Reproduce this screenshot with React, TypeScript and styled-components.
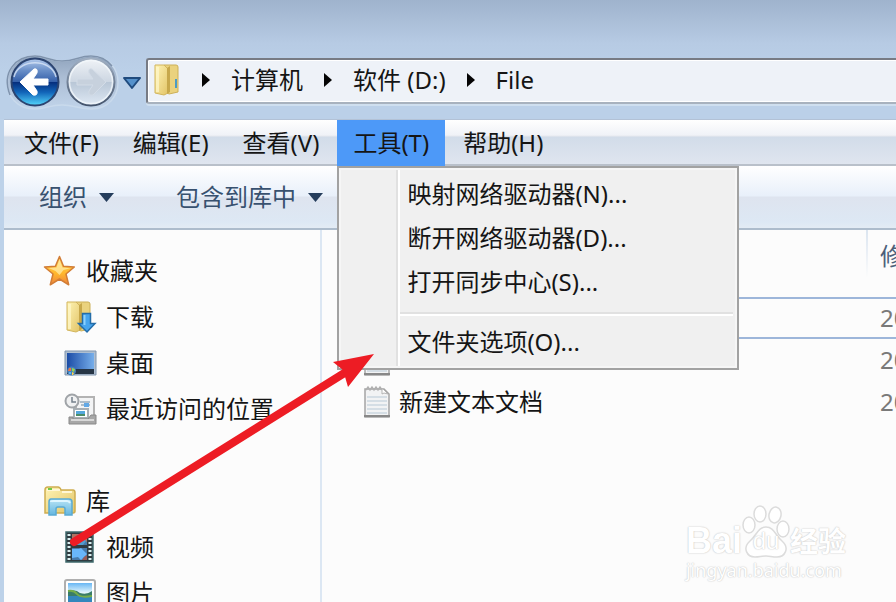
import React from "react";
import styled, { createGlobalStyle, css } from "styled-components";

const GlobalStyle = createGlobalStyle`
  * { box-sizing: border-box; }
  html, body { margin: 0; overflow: hidden; }
  body, button, table {
    font-family: "Noto Sans", "Noto Sans CJK SC", sans-serif;
    font-size: 24px;
    line-height: 32px;
    color: #151515;
  }
  button { margin: 0; border: 0; padding: 0; background: none; white-space: nowrap; }
  a { color: inherit; text-decoration: none; }
  svg { display: block; flex: none; }
`;

const Window = styled.div`
  position: relative;
  display: flex;
  flex-direction: column;
  height: 100vh;
  overflow: hidden;
  background: linear-gradient(#9fb3cd 0px, #b7cbe4 44px, #bbd0e8 70px, #bbd0e8 100%);
`;

const NavRow = styled.header`
  display: flex;
  align-items: flex-start;
  margin-top: 52px;
  height: 67px;
  flex: none;
`;

const NavPod = styled.div`
  position: relative;
  display: flex;
  gap: 6px;
  width: 117px;
  padding: 5px 0 0 10px;
  flex: none;
`;

const PodBackdrop = styled.svg`
  position: absolute;
  left: 0;
  top: 0;
`;

const RoundButton = styled.button`
  position: relative;
  width: 50px;
  height: 50px;
`;

const HistoryButton = styled.button`
  display: flex;
  justify-content: center;
  align-items: center;
  width: 29px;
  height: 62px;
  flex: none;
`;

const AddressBar = styled.nav`
  display: flex;
  align-items: center;
  gap: 21px;
  flex: 1;
  height: 46px;
  margin-top: 6px;
  padding: 0 7px 2px 5px;
  border: 2px solid #777b84;
  border-right: 0;
  border-bottom-color: #a8b2be;
  border-radius: 3px 0 0 3px;
  background: #eef2f8;
  box-shadow: inset 1px -1px 0 #fff, inset 0 1px 0 #fff, 0 2px 0 #cfdfef;
`;

const Frame = styled.main`
  display: flex;
  flex-direction: column;
  flex: 1;
  min-height: 0;
  border-left: 4px solid #bdd2e9;
  background: #fcfcfc;
`;

const MenuBar = styled.div`
  display: flex;
  gap: 2px;
  height: 47px;
  flex: none;
  padding-left: 4px;
  border-top: 1px solid #b3c2d6;
  border-bottom: 2px solid #b9c0ca;
  background: linear-gradient(#fff 0, #f0f2f7 15px, #e7e9ef 16px, #d2dce9 17px, #dfe5ef 100%);
`;

const MenuAnchor = styled.div`
  position: relative;
  z-index: 3;
`;

const MenuButton = styled.button<{ $open?: boolean }>`
  height: 46px;
  padding: 0 16px;
  ${(p) => p.$open && css`background: #4d99f8;`}
`;

const DropDown = styled.div`
  position: absolute;
  left: 0;
  top: 46px;
  width: 402px;
  padding: 4px 4px 4px 0;
  border: 2px solid #a2a2a2;
  background: linear-gradient(90deg, #f0f0f0 57px, #e1e1e1 57px, #e1e1e1 59px, #fff 59px, #fff 61px, #f0f0f0 61px);
  box-shadow: inset 0 0 0 2px #f6f6f6;
`;

const MenuItem = styled.button`
  display: block;
  width: 100%;
  height: 44px;
  padding: 0 0 0 68px;
  text-align: left;
`;

const MenuRule = styled.hr`
  height: 4px;
  margin: 8px 0 4px 61px;
  border: 0;
  border-top: 2px solid #e1e1e1;
  background: #fff;
`;

const CommandBar = styled.div`
  display: flex;
  align-items: center;
  gap: 62px;
  height: 64px;
  flex: none;
  padding-left: 35px;
  border-bottom: 2px solid #adbccc;
  background: linear-gradient(#fff 0, #e8f0fa 30px, #dee4ef 31px, #dde8f4 56px, #e3ebf4 100%);
`;

const CommandButton = styled.button`
  display: flex;
  align-items: center;
  gap: 12px;
  color: #38516f;
`;

const Panes = styled.div`
  display: flex;
  flex: 1;
  min-height: 0;
`;

const Sidebar = styled.aside`
  width: 318px;
  flex: none;
  padding: 18px 0 0 38px;
  border-right: 2px solid #dce7f3;
`;

const TreeGroup = styled.ul`
  margin: 0 0 46px;
  padding: 0;
  list-style: none;
`;

const TreeLink = styled.a<{ $child?: boolean }>`
  display: flex;
  align-items: center;
  gap: ${(p) => (p.$child ? 8 : 10)}px;
  height: 46px;
  padding-left: ${(p) => (p.$child ? 22 : 0)}px;
  white-space: nowrap;
`;

const FilePane = styled.section`
  flex: 1;
  min-width: 0;
  padding-left: 28px;
  overflow: hidden;
`;

const FileTable = styled.table`
  width: 100%;
  table-layout: fixed;
  border-collapse: separate;
  border-spacing: 0;
`;

const HeadCell = styled.th<{ $date?: boolean }>`
  height: 67px;
  padding: 10px 0 0 14px;
  width: ${(p) => (p.$date ? "30px" : "auto")};
  overflow: hidden;
  vertical-align: top;
  text-align: left;
  font-weight: 400;
  white-space: nowrap;
  color: #4c607a;
  ${(p) =>
    p.$date &&
    css`
      background: linear-gradient(#dbe5f0, #fcfcfc 48px) no-repeat left top / 2px 48px;
    `}
`;

const FileRow = styled.tr<{ $selected?: boolean }>`
  td {
    height: 42px;
    padding: 0 0 0 14px;
    overflow: hidden;
    white-space: nowrap;
    color: #797979;
    box-shadow: ${(p) => (p.$selected ? "inset 0 2px #9db6da, inset 0 -2px #9db6da" : "none")};
  }
  td:first-child { padding-left: 13px; color: #151515; }
`;

const FileName = styled.span`
  display: flex;
  align-items: center;
  gap: 8px;
`;

const Annotation = styled.svg`
  position: absolute;
  left: 60px;
  top: 345px;
  z-index: 5;
  pointer-events: none;
`;

const Watermark = styled.div`
  position: absolute;
  right: 50px;
  bottom: 20px;
  z-index: 2;
  color: #fff;
  text-shadow: 0 0 1px #c4c4c4, 0 0 2px #d4d4d4;
`;

const WatermarkLogo = styled.div`
  display: flex;
  align-items: flex-end;
  height: 54px;
  font-weight: 700;
`;

const Brand = styled.span`
  font-family: "Liberation Sans", sans-serif;
  font-size: 36px;
  line-height: 34px;
`;

const Paw = styled.span`
  position: relative;
  width: 48px;
  height: 53px;
`;

const PawText = styled.span`
  position: absolute;
  left: 0;
  right: 0;
  bottom: 5px;
  text-align: center;
  font-family: "Liberation Sans", sans-serif;
  font-size: 24px;
  font-weight: 400;
  line-height: 24px;
`;

const Product = styled.span`
  font-size: 28px;
  line-height: 34px;
`;

const Site = styled.div`
  font-size: 18px;
  line-height: 24px;
`;

const Crumb = () => (
  <svg width="8" height="14" viewBox="0 0 8 14" aria-hidden="true"><path d="M0 0l8 7-8 7z" fill="#050505" /></svg>
);

const Caret = () => (
  <svg width="15" height="9" viewBox="0 0 15 9" aria-hidden="true"><path d="M0 0h15l-7.500 9z" fill="#253d5c" /></svg>
);

const FolderShape = () => (
  <>
    <path d="M11 2h12q2 0 2 2v25l-9 2-5-3z" fill="#ead27e" stroke="#ccb058" />
    <path d="M2 2h9l4 4v24l-4 2-9-2z" fill="url(#folderFace)" stroke="#d2b55c" />
    <path d="M14 5l3-2v26l-3 2z" fill="#c7a84b" />
    <path d="M3 4h3v25H3z" fill="#fff8cc" opacity=".7" />
  </>
);

const Star = () => (
  <svg width="34" height="32" viewBox="0 0 34 32" aria-hidden="true">
    <path d="M17.500 1.500l4 9.800 10.800.7-8.300 7 2.700 10.800-9.200-5.800-9.200 5.800L11 19l-8.500-7 10.900-.7z" fill="url(#starFill)" stroke="#d27d36" strokeWidth="1.500" strokeLinejoin="round" />
    <path d="M17.500 4.500l3 8 8 .7-7 1.800-4 5-4-4-7-3 8-.5z" fill="#fff2b8" opacity=".65" />
  </svg>
);

const Download = () => (
  <svg width="34" height="34" viewBox="0 0 34 34" aria-hidden="true">
    <g transform="translate(1 0)"><FolderShape /></g>
    <path d="M18.500 13.500h8v10H31L23 32l-8.500-8.500h4z" fill="#47a5ee" stroke="#246da9" strokeWidth="1.500" />
    <path d="M20.500 15v10" stroke="#8bd1ff" strokeWidth="2" />
  </svg>
);

const Desktop = () => (
  <svg width="34" height="32" viewBox="0 0 34 32" aria-hidden="true">
    <path d="M1 4h31v24H1z" fill="#aebed0" stroke="#8095ad" />
    <path d="M3 6h27v20H3z" fill="url(#screen)" />
    <path d="M3 22h27v5H3z" fill="#263545" />
    <circle cx="7.500" cy="24" r="4.500" fill="#477fb9" />
    <path d="M5 21h2v3H4z" fill="#f27342" /><path d="M8 21l3 1-1 3-2-1z" fill="#96d451" />
    <path d="M5 25h2v2H5z" fill="#58b4f4" /><path d="M8 25l2 1-1 2H8z" fill="#ffd44a" />
  </svg>
);

const Recent = () => (
  <svg width="34" height="34" viewBox="0 0 34 34" aria-hidden="true">
    <path d="M12 5h18v24H12z" fill="#f3f4f5" stroke="#b3b3b3" strokeWidth="2" />
    <path d="M16 10h10M17 13h9" stroke="#afbdc9" strokeWidth="2" />
    <path d="M20 11h5v4h-5z" fill="#62a9e7" />
    <path d="M10 17h14v9H10z" fill="#fff" stroke="#a8afb4" strokeWidth="2" />
    <path d="M12 19h9v4h-9z" fill="#54a8dd" /><path d="M12 22h9v2h-9z" fill="#4c8d69" />
    <path d="M5 25h4v2h15l3-4h5v9H5z" fill="#a7a7a7" stroke="#898989" />
    <path d="M7 28h23" stroke="#d8d8d8" strokeWidth="2" />
    <circle cx="8" cy="9" r="6.500" fill="#f0f1f2" stroke="#a0a4a8" strokeWidth="2" />
    <path d="M8 5v5h4" fill="none" stroke="#74808c" strokeWidth="1.500" />
  </svg>
);

const Library = () => (
  <svg width="34" height="32" viewBox="0 0 34 32" aria-hidden="true">
    <path d="M3 28V5q0-3 3-3h10q2 0 3 3h12q2 0 2 3v18q0 2-2 2z" fill="url(#folderFace)" stroke="#cead50" strokeWidth="1.500" />
    <path d="M5 5h13M20 7h10" stroke="#fff7d6" strokeWidth="2" /><path d="M6 3h4v2H6z" fill="#70cb46" />
    <path d="M9 14h18q3 0 3 3v13h-7v-6q0-2-2-2h-5q-2 0-2 2v6H7V17q0-3 2-3z" fill="url(#glass)" stroke="#5aaad4" strokeWidth="1.500" />
    <path d="M9 17q0-1 2-1h14q2 0 3 2" fill="none" stroke="#dff6ff" strokeWidth="2" />
  </svg>
);

const Video = () => (
  <svg width="34" height="34" viewBox="0 0 34 34" aria-hidden="true">
    <path d="M2 2h27v30H2z" fill="#303b40" stroke="#3f6a6c" strokeWidth="1.500" />
    <path d="M5 4v27M26 4v27" stroke="#d7eff0" strokeWidth="3" strokeDasharray="2 2" />
    <path d="M8 4h15v11H8zM8 18h15v12H8z" fill="#477aab" />
    <path d="M8 4h15v8l-4-3-5 4-6-3z" fill="#b07261" /><path d="M10 8l5-4 7 7-3 4H8z" fill="#529ed0" />
    <path d="M8 19h7l2-1 6 6-6 6-3-3-6 1z" fill="#69b6fa" /><path d="M20 27l3-2v5h-5z" fill="#985c58" />
  </svg>
);

const Pictures = () => (
  <svg width="34" height="32" viewBox="0 0 34 32" aria-hidden="true">
    <rect x="1" y="3" width="30" height="27" rx="2" fill="#fff" stroke="#afafaf" strokeWidth="2" />
    <path d="M4 6h24v20H4z" fill="url(#sky)" />
    <path d="M4 14q8-2 12 2 7 2 12-2v8H4z" fill="#397d68" /><path d="M4 19h24v7H4z" fill="#3387bd" />
    <path d="M4 14q6-1 9 3t15 2" fill="none" stroke="#75ad4a" strokeWidth="2" />
  </svg>
);

const Notepad = () => (
  <svg width="28" height="34" viewBox="0 0 28 34" aria-hidden="true">
    <path d="M2 4h19l5 5v23H2z" fill="#f2f3f4" stroke="#a4a4a4" strokeWidth="1.500" />
    <path d="M4 12h20M4 16h20M4 20h20M4 24h20M4 28h20" stroke="#cbd7e0" strokeWidth="1.500" />
    <path d="M3 5l2-3 2 3 2-3 2 3 2-3 2 3 2-3 2 3" fill="none" stroke="#b0b0b0" strokeWidth="1.500" />
    <path d="M19 4v5q1-2 6 0l-5-5z" fill="#fff" stroke="#b4b4b4" /><path d="M1 31h26" stroke="#888" strokeWidth="2" />
  </svg>
);

const Gradients = () => (
  <svg width="0" height="0" aria-hidden="true">
    <defs>
      <linearGradient id="folderFace" x2="1" y2="1"><stop stopColor="#fff4b5" /><stop offset="1" stopColor="#e2c467" /></linearGradient>
      <linearGradient id="starFill" x2="0" y2="1"><stop stopColor="#ffd45b" /><stop offset=".6" stopColor="#ffb72d" /><stop offset="1" stopColor="#ed813e" /></linearGradient>
      <linearGradient id="screen" x2="1" y2="0"><stop stopColor="#1c4ca6" /><stop offset="1" stopColor="#76aeea" /></linearGradient>
      <linearGradient id="glass" x2="0" y2="1"><stop stopColor="#b8e4f5" /><stop offset="1" stopColor="#65b6df" /></linearGradient>
      <linearGradient id="sky" x2="0" y2="1"><stop stopColor="#68b7f4" /><stop offset=".5" stopColor="#e7f7fb" /></linearGradient>
      <linearGradient id="pod" x2="0" y2="1"><stop stopColor="#8fa3bc" /><stop offset=".4" stopColor="#abbdd4" /><stop offset="1" stopColor="#c1d4ea" /></linearGradient>
      <linearGradient id="backTop" x2="0" y2="1"><stop stopColor="#b4cbed" /><stop offset=".25" stopColor="#6a8fc8" /><stop offset=".5" stopColor="#345fa9" /><stop offset=".51" stopColor="#062f7e" /><stop offset=".72" stopColor="#1265b9" /><stop offset="1" stopColor="#55d8fc" /></linearGradient>
      <linearGradient id="forwardFace" x2="0" y2="1"><stop stopColor="#f0f3f7" /><stop offset=".5" stopColor="#ccd6e2" /><stop offset=".51" stopColor="#b9c7d7" /><stop offset="1" stopColor="#dfe9f4" /></linearGradient>
      <linearGradient id="rim" x2="0" y2="1"><stop stopColor="#a0afc2" /><stop offset="1" stopColor="#44546c" /></linearGradient>
    </defs>
  </svg>
);

const favorites = [
  { name: "下载", Icon: Download },
  { name: "桌面", Icon: Desktop },
  { name: "最近访问的位置", Icon: Recent },
];
const libraries = [
  { name: "视频", Icon: Video },
  { name: "图片", Icon: Pictures },
];
const files = [
  { id: 1, name: "", selected: true },
  { id: 2, name: "" },
  { id: 3, name: "新建文本文档" },
];

export default function App() {
  return (
    <Window>
      <GlobalStyle />
      <Gradients />
      <NavRow>
        <NavPod>
          <PodBackdrop width="120" height="60" viewBox="0 0 120 60" aria-hidden="true">
            <path d="M35 4c10 0 14 5 27 5S79 4 91 4c36 0 36 53 0 53-12 0-17-4-29-4s-17 4-27 4C-2 57-2 4 35 4z" fill="url(#pod)" stroke="#c9daec" strokeWidth="1.500" />
            <path d="M10 43C1 20 16 4 35 4c10 0 14 5 27 5S79 4 91 4c10 0 17 5 21 10" fill="none" stroke="#7f93ad" strokeWidth="1.500" />
          </PodBackdrop>
          <RoundButton aria-label="后退">
            <svg width="50" height="50" viewBox="0 0 50 50">
              <circle cx="25" cy="25" r="23.500" fill="url(#backTop)" stroke="#2c4470" strokeWidth="2" />
              <path d="M4 20C8 1 42 1 46 20" fill="none" stroke="#d8e5f6" strokeWidth="1.500" opacity=".8" />
              <path d="M10 25l14-13q4-1 3 4l-4 6h15v6H23l4 6q1 5-4 4z" fill="#fff" stroke="#fff" strokeWidth="1" />
            </svg>
          </RoundButton>
          <RoundButton aria-label="前进">
            <svg width="50" height="50" viewBox="0 0 50 50">
              <circle cx="25" cy="25" r="23.500" fill="url(#forwardFace)" stroke="url(#rim)" strokeWidth="2" />
              <circle cx="25" cy="25" r="21.500" fill="none" stroke="#f3f7fb" strokeWidth="1.500" opacity=".8" />
              <path d="M40 25L26 12q-4-1-3 4l4 6H11v6h16l-4 6q-1 5 4 4z" fill="#c7d1dd" stroke="#d3dce7" />
            </svg>
          </RoundButton>
        </NavPod>
        <HistoryButton aria-label="最近的页面">
          <svg width="20" height="14" viewBox="0 0 20 14"><path d="M2 2h16l-8 10z" fill="#5591cb" stroke="#204b7e" strokeWidth="2" strokeLinejoin="round" /></svg>
        </HistoryButton>
        <AddressBar aria-label="地址">
          <svg width="28" height="34" viewBox="0 0 28 34" aria-hidden="true"><FolderShape /><path d="M23 16v9" stroke="#4c9bc4" strokeWidth="2" /></svg>
          <Crumb /><a href="#computer">计算机</a>
          <Crumb /><a href="#drive">软件 (D:)</a>
          <Crumb /><a href="#file">File</a>
        </AddressBar>
      </NavRow>
      <Frame>
        <MenuBar>
          <MenuButton>文件(F)</MenuButton>
          <MenuButton>编辑(E)</MenuButton>
          <MenuButton>查看(V)</MenuButton>
          <MenuAnchor>
            <MenuButton $open aria-haspopup="menu" aria-expanded="true">工具(T)</MenuButton>
            <DropDown role="menu">
              <MenuItem role="menuitem">映射网络驱动器(N)...</MenuItem>
              <MenuItem role="menuitem">断开网络驱动器(D)...</MenuItem>
              <MenuItem role="menuitem">打开同步中心(S)...</MenuItem>
              <MenuRule />
              <MenuItem role="menuitem">文件夹选项(O)...</MenuItem>
            </DropDown>
          </MenuAnchor>
          <MenuButton>帮助(H)</MenuButton>
        </MenuBar>
        <CommandBar>
          <CommandButton>组织<Caret /></CommandButton>
          <CommandButton>包含到库中<Caret /></CommandButton>
        </CommandBar>
        <Panes>
          <Sidebar>
            <TreeGroup>
              <li><TreeLink href="#favorites"><Star />收藏夹</TreeLink></li>
              {favorites.map(({ name, Icon }) => (
                <li key={name}><TreeLink $child href={`#${name}`}><Icon />{name}</TreeLink></li>
              ))}
            </TreeGroup>
            <TreeGroup>
              <li><TreeLink href="#libraries"><Library />库</TreeLink></li>
              {libraries.map(({ name, Icon }) => (
                <li key={name}><TreeLink $child href={`#${name}`}><Icon />{name}</TreeLink></li>
              ))}
            </TreeGroup>
          </Sidebar>
          <FilePane>
            <FileTable>
              <thead><tr><HeadCell /><HeadCell $date>修</HeadCell></tr></thead>
              <tbody>
                {files.map((file) => (
                  <FileRow key={file.id} $selected={file.selected}>
                    <td><FileName><Notepad />{file.name}</FileName></td>
                    <td>20</td>
                  </FileRow>
                ))}
              </tbody>
            </FileTable>
          </FilePane>
        </Panes>
      </Frame>
      <Watermark>
        <WatermarkLogo>
          <Brand>Bai</Brand>
          <Paw>
            <svg width="48" height="53" viewBox="0 0 48 53" fill="#fff" stroke="#dcdcdc" strokeWidth="1.500" aria-hidden="true">
              <ellipse cx="7" cy="20" rx="6" ry="8" /><ellipse cx="18" cy="9" rx="6" ry="8" />
              <ellipse cx="33" cy="10" rx="6" ry="8" transform="rotate(12 33 10)" /><ellipse cx="41" cy="24" rx="6" ry="8" />
              <path d="M24 22c8 0 9 8 16 14 8 7 3 16-5 16-5 0-7-1-11-1s-7 1-11 1C5 52 0 43 8 36c7-6 8-14 16-14z" />
            </svg>
            <PawText>du</PawText>
          </Paw>
          <Product>经验</Product>
        </WatermarkLogo>
        <Site>jingyan.baidu.com</Site>
      </Watermark>
      <Annotation width="320" height="210" viewBox="60 345 320 210" aria-hidden="true">
        <path d="M74 542L346 372" stroke="#ed1c24" strokeWidth="8" strokeLinecap="round" />
        <path d="M374 354L333 362l10 8 5 17z" fill="#ed1c24" />
      </Annotation>
    </Window>
  );
}
